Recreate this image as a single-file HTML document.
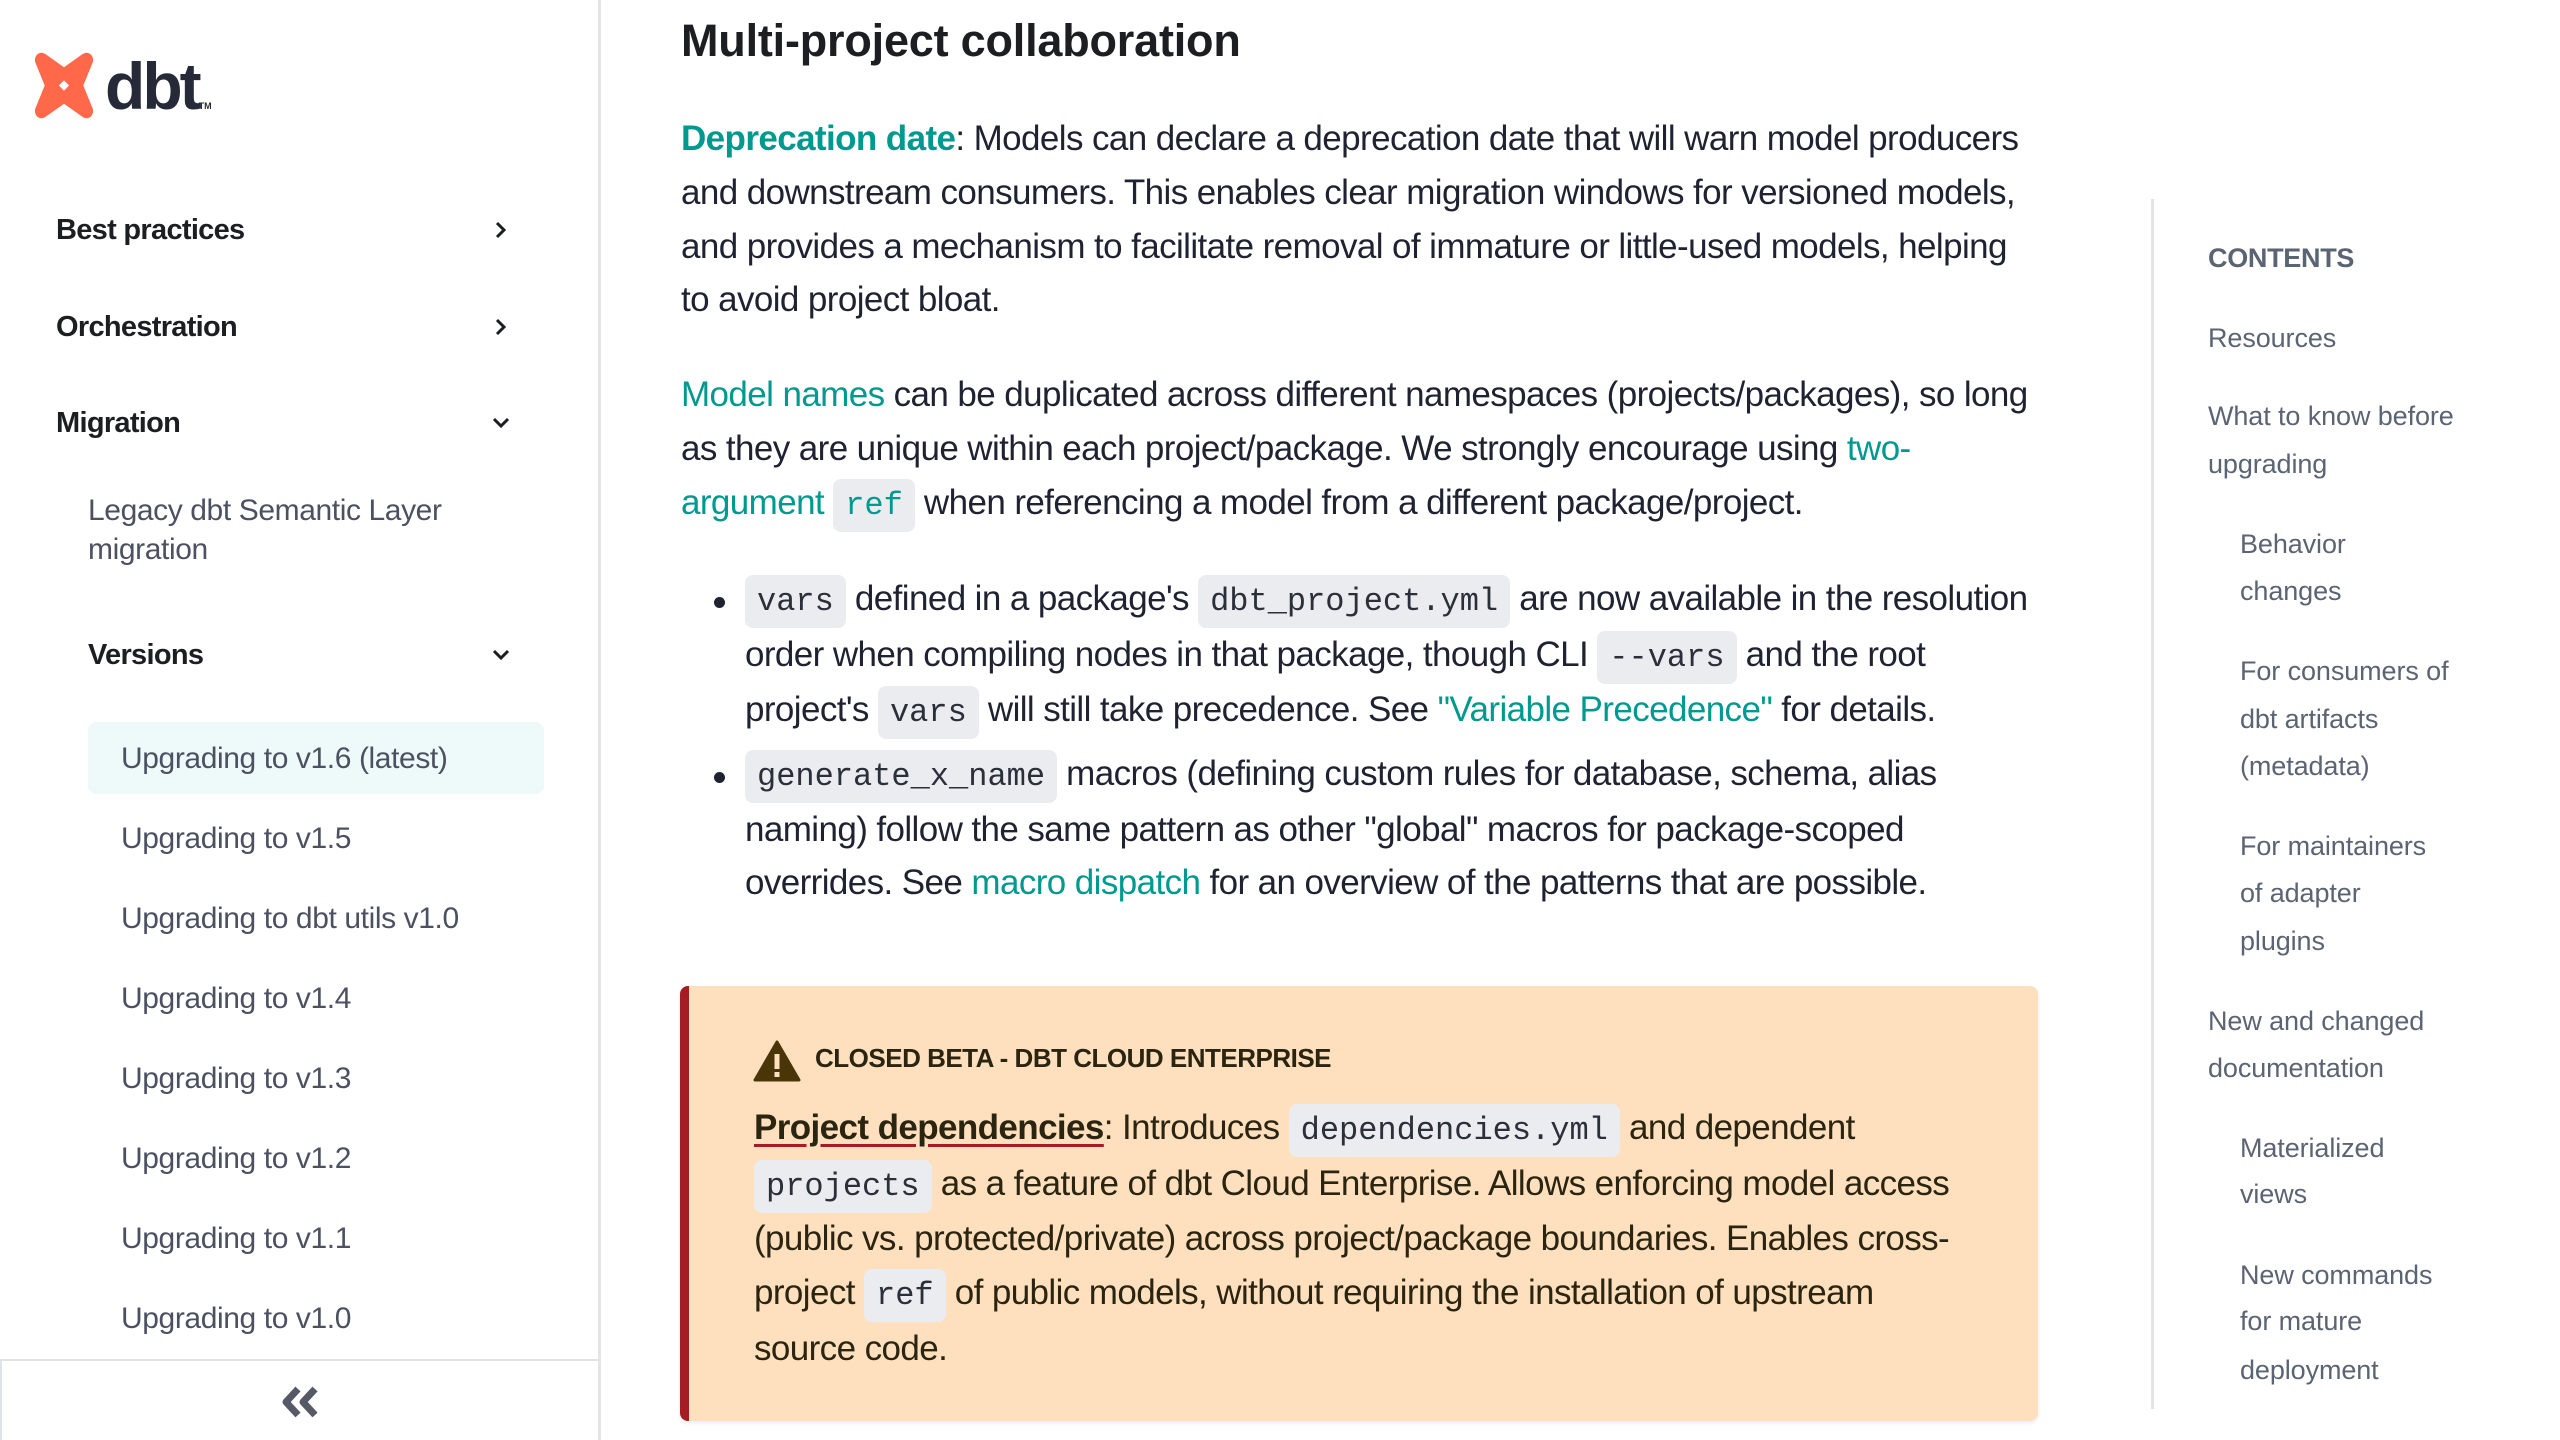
<!DOCTYPE html>
<html><head><meta charset="utf-8"><style>
*{margin:0;padding:0;box-sizing:border-box}
body{width:2560px;height:1440px;overflow:hidden;background:#fff;font-family:"Liberation Sans",sans-serif;color:#1c1e21;position:relative}
.a{position:absolute;white-space:nowrap}
.sb{font-size:29px;letter-spacing:-0.7px;line-height:40px;color:#1c1e21;font-weight:bold}
.si{font-size:30px;letter-spacing:-0.4px;line-height:40px;color:#4b5160}
.l{position:absolute;white-space:nowrap;font-size:35px;letter-spacing:-0.6px;line-height:54px;color:#1f2230}
.lk{color:#00998f}
code{font-family:"Liberation Mono",monospace;font-size:32px;letter-spacing:0;background:#eaecef;border-radius:8px;padding:8px 12px;color:#2b2f3a}
.toc{position:absolute;white-space:nowrap;font-size:27px;letter-spacing:-0.1px;line-height:47px;color:#5b6472}
</style></head><body>

<svg class="a" style="left:31px;top:52px" width="66" height="67" viewBox="0 0 64 66">
<path d="M6 2 Q10 -1 15 3 L32 15 L49 3 Q54 -1 58 2 Q62 6 60 11 L51 33 L60 55 Q62 60 58 64 Q54 67 49 63 L32 51 L15 63 Q10 67 6 64 Q2 60 4 55 L13 33 L4 11 Q2 6 6 2 Z" fill="#ff694a"/>
<path d="M32 28 L37 33 L32 38 L27 33 Z" fill="#fff"/>
</svg>
<div class="a" style="left:105px;top:46px;font-size:66px;font-weight:bold;letter-spacing:-3px;color:#262a38;line-height:80px">dbt<span style="font-size:9px;letter-spacing:0">TM</span></div>

<div class="a sb" style="left:56px;top:210px">Best practices</div>
<div class="a sb" style="left:56px;top:307px">Orchestration</div>
<div class="a sb" style="left:56px;top:403px">Migration</div>
<svg class="a" style="left:492px;top:220px" width="18" height="20" viewBox="0 0 18 20"><polyline points="5,3 12,10 5,17" fill="none" stroke="#1c1e21" stroke-width="3"/></svg>
<svg class="a" style="left:492px;top:317px" width="18" height="20" viewBox="0 0 18 20"><polyline points="5,3 12,10 5,17" fill="none" stroke="#1c1e21" stroke-width="3"/></svg>
<svg class="a" style="left:491px;top:414px" width="20" height="18" viewBox="0 0 20 18"><polyline points="3,5 10,12 17,5" fill="none" stroke="#1c1e21" stroke-width="3"/></svg>
<div class="a si" style="left:88px;top:491px">Legacy dbt Semantic Layer</div>
<div class="a si" style="left:88px;top:530px">migration</div>
<div class="a sb" style="left:88px;top:635px">Versions</div>
<svg class="a" style="left:491px;top:646px" width="20" height="18" viewBox="0 0 20 18"><polyline points="3,5 10,12 17,5" fill="none" stroke="#1c1e21" stroke-width="3"/></svg>
<div class="a" style="left:88px;top:722px;width:456px;height:72px;background:#eef9fa;border-radius:8px"></div>
<div class="a si" style="left:121px;top:739px">Upgrading to v1.6 (latest)</div>
<div class="a si" style="left:121px;top:819px">Upgrading to v1.5</div>
<div class="a si" style="left:121px;top:899px">Upgrading to dbt utils v1.0</div>
<div class="a si" style="left:121px;top:979px">Upgrading to v1.4</div>
<div class="a si" style="left:121px;top:1059px">Upgrading to v1.3</div>
<div class="a si" style="left:121px;top:1139px">Upgrading to v1.2</div>
<div class="a si" style="left:121px;top:1219px">Upgrading to v1.1</div>
<div class="a si" style="left:121px;top:1299px">Upgrading to v1.0</div>
<div class="a" style="left:0;top:1359px;width:599px;height:81px;border-top:2px solid #dfe2e6;border-left:2px solid #dfe2e6;background:#fff"></div>
<svg class="a" style="left:279px;top:1386px" width="42" height="32" viewBox="0 0 42 32"><polyline points="19,3 7,16 19,29" fill="none" stroke="#555a66" stroke-width="7" stroke-linejoin="round"/><polyline points="36,3 24,16 36,29" fill="none" stroke="#555a66" stroke-width="7" stroke-linejoin="round"/></svg>
<div class="a" style="left:598px;top:0;width:3px;height:1440px;background:#e2e4e8"></div>

<div class="a" style="left:681px;top:11px;font-size:45px;font-weight:bold;letter-spacing:-0.2px;color:#1c1e21;line-height:60px">Multi-project collaboration</div>

<div class="l" style="left:681px;top:112px"><b class="lk">Deprecation date</b>: Models can declare a deprecation date that will warn model producers</div>
<div class="l" style="left:681px;top:166px">and downstream consumers. This enables clear migration windows for versioned models,</div>
<div class="l" style="left:681px;top:220px">and provides a mechanism to facilitate removal of immature or little-used models, helping</div>
<div class="l" style="left:681px;top:273px">to avoid project bloat.</div>

<div class="l" style="left:681px;top:368px"><span class="lk">Model names</span> can be duplicated across different namespaces (projects/packages), so long</div>
<div class="l" style="left:681px;top:422px">as they are unique within each project/package. We strongly encourage using <span class="lk">two-</span></div>
<div class="l" style="left:681px;top:476px"><span class="lk">argument</span> <code class="lk">ref</code> when referencing a model from a different package/project.</div>

<div class="a" style="left:714px;top:597px;width:11px;height:11px;border-radius:50%;background:#1f2230"></div>
<div class="l" style="left:745px;top:572px"><code>vars</code> defined in a package's <code>dbt_project.yml</code> are now available in the resolution</div>
<div class="l" style="left:745px;top:628px">order when compiling nodes in that package, though CLI <code>--vars</code> and the root</div>
<div class="l" style="left:745px;top:683px">project's <code>vars</code> will still take precedence. See <span class="lk">"Variable Precedence"</span> for details.</div>
<div class="a" style="left:714px;top:772px;width:11px;height:11px;border-radius:50%;background:#1f2230"></div>
<div class="l" style="left:745px;top:747px"><code>generate_x_name</code> macros (defining custom rules for database, schema, alias</div>
<div class="l" style="left:745px;top:803px">naming) follow the same pattern as other "global" macros for package-scoped</div>
<div class="l" style="left:745px;top:856px">overrides. See <span class="lk">macro dispatch</span> for an overview of the patterns that are possible.</div>

<div class="a" style="left:680px;top:986px;width:1358px;height:435px;background:#fee0be;border-left:9px solid #a51d24;border-radius:8px;box-shadow:0 2px 4px rgba(0,0,0,0.08)"></div>
<svg class="a" style="left:753px;top:1040px" width="48" height="42" viewBox="0 0 48 42"><path d="M24 2 L46 40 L2 40 Z" fill="#4a3508" stroke="#4a3508" stroke-width="3" stroke-linejoin="round"/><rect x="21.5" y="14" width="5" height="15" fill="#fee0be"/><rect x="21.5" y="32" width="5" height="5" fill="#fee0be"/></svg>
<div class="a" style="left:815px;top:1041px;font-size:26px;font-weight:bold;letter-spacing:-0.5px;line-height:34px;color:#2a2410">CLOSED BETA - DBT CLOUD ENTERPRISE</div>
<div class="l" style="left:754px;top:1101px;color:#2a2410"><b style="text-decoration:underline;text-decoration-color:#a51d24;text-underline-offset:5px">Project dependencies</b>: Introduces <code>dependencies.yml</code> and dependent</div>
<div class="l" style="left:754px;top:1157px;color:#2a2410"><code>projects</code> as a feature of dbt Cloud Enterprise. Allows enforcing model access</div>
<div class="l" style="left:754px;top:1212px;color:#2a2410">(public vs. protected/private) across project/package boundaries. Enables cross-</div>
<div class="l" style="left:754px;top:1266px;color:#2a2410">project <code>ref</code> of public models, without requiring the installation of upstream</div>
<div class="l" style="left:754px;top:1322px;color:#2a2410">source code.</div>

<div class="a" style="left:2151px;top:199px;width:3px;height:1210px;background:#e2e4e8"></div>
<div class="toc" style="left:2208px;top:235px;font-weight:bold;letter-spacing:-0.3px">CONTENTS</div>
<div class="toc" style="left:2208px;top:315px">Resources</div>
<div class="toc" style="left:2208px;top:393px">What to know before</div>
<div class="toc" style="left:2208px;top:441px">upgrading</div>
<div class="toc" style="left:2240px;top:521px">Behavior</div>
<div class="toc" style="left:2240px;top:568px">changes</div>
<div class="toc" style="left:2240px;top:648px">For consumers of</div>
<div class="toc" style="left:2240px;top:696px">dbt artifacts</div>
<div class="toc" style="left:2240px;top:743px">(metadata)</div>
<div class="toc" style="left:2240px;top:823px">For maintainers</div>
<div class="toc" style="left:2240px;top:870px">of adapter</div>
<div class="toc" style="left:2240px;top:918px">plugins</div>
<div class="toc" style="left:2208px;top:998px">New and changed</div>
<div class="toc" style="left:2208px;top:1045px">documentation</div>
<div class="toc" style="left:2240px;top:1125px">Materialized</div>
<div class="toc" style="left:2240px;top:1171px">views</div>
<div class="toc" style="left:2240px;top:1252px">New commands</div>
<div class="toc" style="left:2240px;top:1298px">for mature</div>
<div class="toc" style="left:2240px;top:1347px">deployment</div>
</body></html>
